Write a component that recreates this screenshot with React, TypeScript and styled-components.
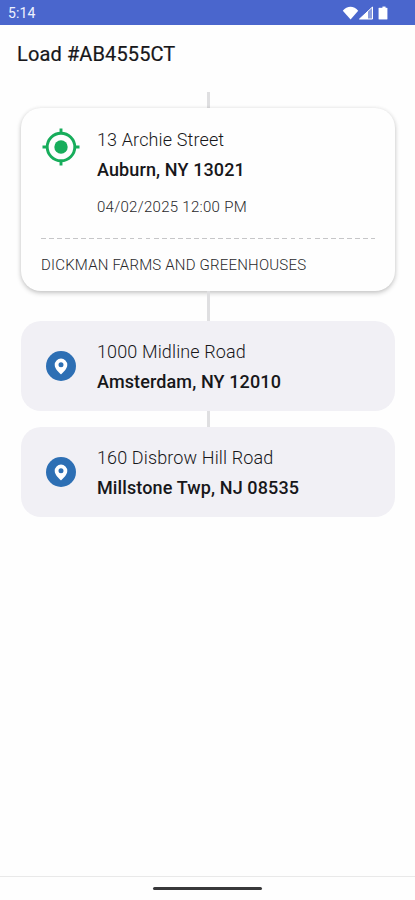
import React from "react";
import styled, { createGlobalStyle } from "styled-components";

const GlobalStyle = createGlobalStyle`
  *, *::before, *::after { box-sizing: border-box; }
  body { margin: 0; background: #fefefe; }
`;

const Screen = styled.div`
  display: flex;
  flex-direction: column;
  height: 900px;
  background: #fefefe;
  font-family: Roboto, "Liberation Sans", sans-serif;
  color: #17171a;
  overflow: hidden;
`;

const StatusBar = styled.header`
  display: flex;
  align-items: center;
  justify-content: space-between;
  flex: none;
  height: 24.5px;
  padding: 1px 25px 0 8px;
  background: #4a66cd;
  color: #eef2ff;
`;

const Clock = styled.span`
  font-size: 14px;
  line-height: 20px;
  letter-spacing: 0.1px;
`;

const StatusIcons = styled.svg`
  display: block;
  width: 48px;
  height: 16px;
`;

const Title = styled.h1`
  flex: none;
  margin: 0;
  height: 67.5px;
  padding: 17px 17px 0;
  font-size: 20px;
  line-height: 24px;
  font-weight: 400;
  letter-spacing: 0.12px;
  -webkit-text-stroke: 0.2px #17171a;
`;

const Route = styled.main`
  flex: 1;
  display: flex;
  flex-direction: column;
  align-items: center;
  padding: 0 20px 0 21px;
`;

const Connector = styled.div<{ $length: number }>`
  flex: none;
  width: 3px;
  height: ${(p) => p.$length}px;
  background: #dfdfe1;
`;

const StopCard = styled.section<{ $active?: boolean }>`
  flex: none;
  width: 100%;
  height: ${(p) => (p.$active ? 183 : 90)}px;
  padding: ${(p) => (p.$active ? "20px 20px 0" : "19px 20px 0")};
  border-radius: 20px;
  background: ${(p) => (p.$active ? "#fefefe" : "#f1f0f5")};
  box-shadow: ${(p) =>
    p.$active ? "0 2px 5px rgba(0, 0, 0, 0.22), 0 0 4px rgba(0, 0, 0, 0.05)" : "none"};
`;

const StopBody = styled.div`
  display: grid;
  grid-template-columns: 40px 1fr;
  column-gap: 16px;
`;

const IconSlot = styled.div<{ $top: number }>`
  display: flex;
  justify-content: center;
  align-items: flex-start;
  padding-top: ${(p) => p.$top}px;
  svg { display: block; }
`;

const Street = styled.div`
  font-size: 18px;
  line-height: 24px;
  font-weight: 300;
  letter-spacing: 0.13px;
  white-space: nowrap;
`;

const City = styled.div`
  margin-top: 6px;
  font-size: 18px;
  line-height: 24px;
  font-weight: 500;
  letter-spacing: 0.12px;
  white-space: nowrap;
`;

const Appointment = styled.div`
  margin-top: 15px;
  font-size: 15px;
  line-height: 20px;
  font-weight: 300;
  letter-spacing: 0.29px;
  color: #29292c;
  white-space: nowrap;
`;

const DashedRule = styled.div`
  height: 1px;
  margin-top: 21px;
  background: repeating-linear-gradient(90deg, #c6c6c8 0 4.8px, transparent 4.8px 8.05px);
`;

const Facility = styled.div`
  margin-top: 16px;
  font-size: 15px;
  line-height: 20px;
  font-weight: 300;
  letter-spacing: 0.2px;
  color: #29292c;
  white-space: nowrap;
`;

const NavBar = styled.footer`
  flex: none;
  display: flex;
  justify-content: center;
  height: 24px;
  padding-top: 10px;
  border-top: 1px solid #e9e9e9;
`;

const HomeHandle = styled.div`
  width: 109px;
  height: 3px;
  border-radius: 2px;
  background: #38383a;
`;

const TargetIcon = () => (
  <svg width="38" height="38" viewBox="0 0 38 38" fill="none" stroke="#17ad5b">
    <circle cx="19" cy="19" r="13.8" strokeWidth="2.9" />
    <circle cx="19" cy="19" r="6.7" fill="#17ad5b" stroke="none" />
    <path d="M19 .5v5M19 32.5v5M.5 19h5M32.5 19h5" strokeWidth="2.9" />
  </svg>
);

const PinIcon = () => (
  <svg width="30" height="30" viewBox="0 0 30 30">
    <circle cx="15" cy="15" r="15" fill="#2d6fb4" />
    <path
      d="M15 7.6a6.3 6.3 0 0 0-6.3 6.3c0 4.4 6.3 9.4 6.3 9.4s6.3-5 6.3-9.4A6.3 6.3 0 0 0 15 7.6Zm0 8.7a2.5 2.5 0 1 1 0-5 2.5 2.5 0 0 1 0 5Z"
      fill="#fff"
      fillRule="evenodd"
    />
  </svg>
);

const App = () => (
  <>
    <GlobalStyle />
    <Screen>
      <StatusBar>
        <Clock>5:14</Clock>
        <StatusIcons viewBox="0 0 48 16" fill="#fff">
          <path d="M.8 5.2C5-.2 12-.2 16.2 5.2L8.6 14Z" transform="translate(0 .6)" />
          <path d="M30.5 2v12h-13Z" fill="#fff" fillOpacity=".35" stroke="#fff" strokeWidth="1" />
          <path d="M26 6v8h-8.5Z" />
          <path d="M38.8 3h1.8V1.8h2.8V3h1.8v11.2h-8.4V3Z" stroke="#fff" strokeWidth=".4" strokeLinejoin="round" />
        </StatusIcons>
      </StatusBar>
      <Title>Load #AB4555CT</Title>
      <Route>
        <Connector $length={16} />
        <StopCard $active>
          <StopBody>
            <IconSlot $top={0}>
              <TargetIcon />
            </IconSlot>
            <div>
              <Street>13 Archie Street</Street>
              <City>Auburn, NY 13021</City>
              <Appointment>04/02/2025 12:00 PM</Appointment>
            </div>
          </StopBody>
          <DashedRule />
          <Facility>DICKMAN FARMS AND GREENHOUSES</Facility>
        </StopCard>
        <Connector $length={30} />
        <StopCard>
          <StopBody>
            <IconSlot $top={11}>
              <PinIcon />
            </IconSlot>
            <div>
              <Street>1000 Midline Road</Street>
              <City>Amsterdam, NY 12010</City>
            </div>
          </StopBody>
        </StopCard>
        <Connector $length={16} />
        <StopCard>
          <StopBody>
            <IconSlot $top={11}>
              <PinIcon />
            </IconSlot>
            <div>
              <Street>160 Disbrow Hill Road</Street>
              <City>Millstone Twp, NJ 08535</City>
            </div>
          </StopBody>
        </StopCard>
      </Route>
      <NavBar>
        <HomeHandle />
      </NavBar>
    </Screen>
  </>
);

export default App;
